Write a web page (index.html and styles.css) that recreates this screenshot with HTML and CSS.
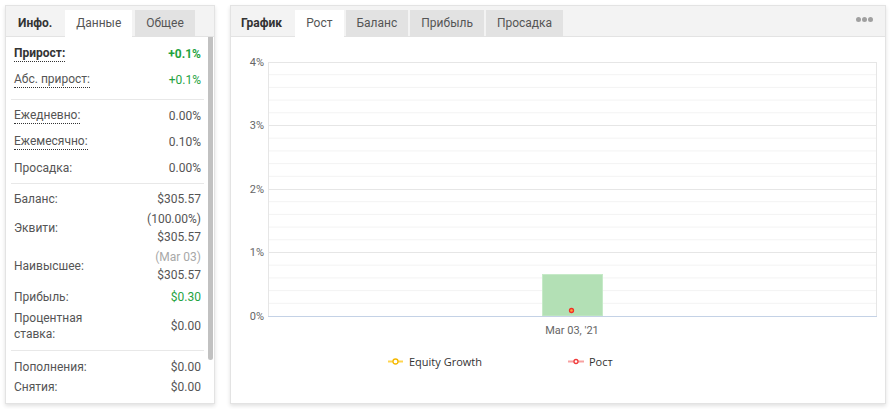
FILE: index.html
```html
<!DOCTYPE html>
<html lang="ru">
<head>
<meta charset="utf-8">
<title>Данные</title>
<link rel="stylesheet" href="styles.css">
</head>
<body>
<div class="panel info">
  <div class="head">
    <span class="title">Инфо.</span>
    <span class="tab active">Данные</span>
    <span class="tab">Общее</span>
  </div>
  <div class="info-body">
    <div class="list">
      <div class="sec s1">
        <div class="row"><span class="lbl dot bold">Прирост:</span><span class="val green bold">+0.1%</span></div>
        <div class="row"><span class="lbl dot">Абс. прирост:</span><span class="val green">+0.1%</span></div>
      </div>
      <div class="sec s2">
        <div class="row"><span class="lbl dot">Ежедневно:</span><span class="val">0.00%</span></div>
        <div class="row"><span class="lbl dot">Ежемесячно:</span><span class="val">0.10%</span></div>
        <div class="row"><span class="lbl">Просадка:</span><span class="val">0.00%</span></div>
      </div>
      <div class="sec s3">
        <div class="row"><span class="lbl">Баланс:</span><span class="val">$305.57</span></div>
        <div class="row"><span class="lbl">Эквити:</span><span class="val">(100.00%)<br>$305.57</span></div>
        <div class="row"><span class="lbl">Наивысшее:</span><span class="val"><span class="muted">(Mar 03)</span><br>$305.57</span></div>
        <div class="row spaced"><span class="lbl">Прибыль:</span><span class="val green">$0.30</span></div>
        <div class="row spaced"><span class="lbl narrow">Процентная ставка:</span><span class="val">$0.00</span></div>
      </div>
      <div class="sec s4">
        <div class="row"><span class="lbl">Пополнения:</span><span class="val">$0.00</span></div>
        <div class="row"><span class="lbl">Снятия:</span><span class="val">$0.00</span></div>
      </div>
    </div>
    <div class="scroll"><div class="thumb"></div></div>
  </div>
</div>

<div class="panel chart">
  <div class="head">
    <span class="title">График</span>
    <span class="tab active">Рост</span>
    <span class="tab">Баланс</span>
    <span class="tab">Прибыль</span>
    <span class="tab">Просадка</span>
    <span class="menu"><i></i><i></i><i></i></span>
  </div>
  <div class="chart-body">
    <svg class="plot" width="654" height="366" viewBox="0 0 654 366">
      <g class="minor">
        <line x1="37" x2="645" y1="37.7" y2="37.7"/>
        <line x1="37" x2="645" y1="50.4" y2="50.4"/>
        <line x1="37" x2="645" y1="63.1" y2="63.1"/>
        <line x1="37" x2="645" y1="75.8" y2="75.8"/>
        <line x1="37" x2="645" y1="101.2" y2="101.2"/>
        <line x1="37" x2="645" y1="113.9" y2="113.9"/>
        <line x1="37" x2="645" y1="126.6" y2="126.6"/>
        <line x1="37" x2="645" y1="139.3" y2="139.3"/>
        <line x1="37" x2="645" y1="164.7" y2="164.7"/>
        <line x1="37" x2="645" y1="177.4" y2="177.4"/>
        <line x1="37" x2="645" y1="190.1" y2="190.1"/>
        <line x1="37" x2="645" y1="202.8" y2="202.8"/>
        <line x1="37" x2="645" y1="228.2" y2="228.2"/>
        <line x1="37" x2="645" y1="240.9" y2="240.9"/>
        <line x1="37" x2="645" y1="253.6" y2="253.6"/>
        <line x1="37" x2="645" y1="266.3" y2="266.3"/>
      </g>
      <g class="major">
        <line x1="37" x2="645" y1="25.5" y2="25.5"/>
        <line x1="37" x2="645" y1="88.5" y2="88.5"/>
        <line x1="37" x2="645" y1="152.5" y2="152.5"/>
        <line x1="37" x2="645" y1="215.5" y2="215.5"/>
        <line x1="37.5" x2="37.5" y1="25" y2="279"/>
        <line x1="645.5" x2="645.5" y1="25" y2="279"/>
      </g>
      <rect class="bar" x="311.5" y="237.5" width="60" height="41.5"/>
      <line class="axis" x1="37" x2="646" y1="279.5" y2="279.5"/>
      <circle class="pt" cx="340.5" cy="273.5" r="2"/>
      <g class="ylab">
        <text x="33" y="29">4%</text>
        <text x="33" y="92">3%</text>
        <text x="33" y="156">2%</text>
        <text x="33" y="219">1%</text>
        <text x="33" y="283">0%</text>
      </g>
      <text class="xlab" x="341" y="297">Mar 03, '21</text>
      <g class="legend">
        <line class="lg-y" x1="157" x2="172" y1="324.5" y2="324.5"/>
        <circle class="lg-yc" cx="164.5" cy="324.5" r="2.5"/>
        <text x="178" y="328.5">Equity Growth</text>
        <line class="lg-r" x1="337" x2="353" y1="324.5" y2="324.5"/>
        <circle class="lg-rc" cx="345" cy="324.5" r="2"/>
        <text x="358" y="328.5">Рост</text>
      </g>
    </svg>
  </div>
</div>
</body>
</html>
```

FILE: styles.css
```css
* { box-sizing: border-box; }
html, body { margin: 0; background: #ffffff; }
body {
  display: flex;
  gap: 15px;
  padding: 5px;
  font-family: Roboto, "Liberation Sans", sans-serif;
  font-size: 12px;
  color: #555;
}
.panel {
  height: 399px;
  border: 1px solid #e3e3e3;
  background: #fff;
  box-shadow: 0 2px 4px rgba(0,0,0,0.12);
  display: flex;
  flex-direction: column;
  overflow: hidden;
}
.info { width: 210px; }
.chart { width: 656px; }

.head {
  height: 31px;
  flex: none;
  background: #f3f3f3;
  border-bottom: 1px solid #e3e3e3;
  display: flex;
  align-items: flex-end;
  font-size: 12px;
  position: relative;
}
.head .title {
  height: 27px;
  line-height: 27px;
  margin-bottom: -1px;
  padding: 0 13px 0 12px;
  font-weight: bold;
  color: #333;
}
.chart .head .title { padding: 0 13px 0 10px; }
.head .tab {
  height: 27px;
  line-height: 27px;
  margin-bottom: -1px;
  padding: 0 11px;
  background: #e2e2e2;
  color: #555;
  margin-right: 2px;
}
.info .head .tab { margin-right: 3px; }
.head .tab.active { background: #fff; }
.menu {
  position: absolute;
  right: 12px;
  top: 11px;
  display: flex;
  gap: 1px;
}
.menu i {
  width: 5px;
  height: 5px;
  border-radius: 50%;
  background: #a0a0a0;
}

.info-body {
  flex: 1;
  display: flex;
  overflow: hidden;
}
.list {
  width: 193px;
  margin-left: 5px;
}
.sec { border-bottom: 1px solid #e8e8e8; }
.sec:last-child { border-bottom: none; }
.row {
  display: flex;
  justify-content: space-between;
  align-items: center;
  padding: 0 3px;
  line-height: 18px;
}
.s1 { padding: 4px 0 6px; }
.s1 .row, .s2 .row { height: 26px; }
.s2 { padding: 3px 0 2px; }
.s3 { padding: 5px 0 7px; }
.s4 { padding: 6px 0 0; }
.s3 .row, .s4 .row { padding-top: 1px; padding-bottom: 1px; }
.s3 .row.spaced { margin-top: 2px; }
.lbl { color: #555; }
.lbl.narrow { width: 80px; line-height: 16px; }
.dot {
  border-bottom: 1px dotted #333;
  line-height: 15px;
}
.bold { font-weight: bold; color: #333; }
.val { text-align: right; color: #555; }
.green, .val.green { color: #1fa33f; }
.muted { color: #a8a8a8; }
.scroll {
  width: 10px;
  display: flex;
  justify-content: flex-end;
  padding-right: 1px;
}
.thumb {
  width: 5px;
  height: 323px;
  background: #c1c1c1;
  border-radius: 0 0 3px 3px;
}

.chart-body { flex: 1; }
.plot { display: block; }
.minor line { stroke: #f3f3f3; stroke-width: 1; }
.major line { stroke: #e6e6e6; stroke-width: 1; }
.axis { stroke: #c4d2e6; stroke-width: 1; }
.bar { fill: #b3e0b5; stroke: #c6eac8; stroke-width: 1; }
.pt { fill: #ffa33a; stroke: #f0302a; stroke-width: 1.3; }
.ylab text {
  font-family: Roboto, sans-serif;
  font-size: 11px;
  fill: #666;
  text-anchor: end;
}
.xlab {
  font-family: Roboto, sans-serif;
  font-size: 11px;
  fill: #666;
  text-anchor: middle;
}
.legend text {
  font-family: "Open Sans", sans-serif;
  font-size: 11px;
  fill: #333;
}
.lg-y { stroke: #ffd54f; stroke-width: 2; }
.lg-yc { fill: #fff; stroke: #f5b800; stroke-width: 1.3; }
.lg-r { stroke: #f7a1a1; stroke-width: 2; }
.lg-rc { fill: #fff; stroke: #f03a3a; stroke-width: 1.3; }
```
